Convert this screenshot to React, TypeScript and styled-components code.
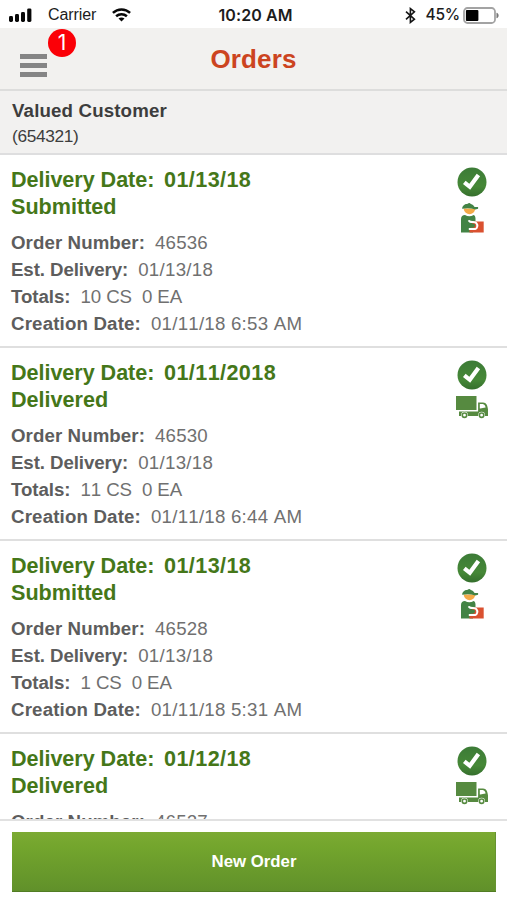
import React from 'react';
import styled, { createGlobalStyle } from 'styled-components';

const GlobalStyle = createGlobalStyle`
  *, *::before, *::after { box-sizing: border-box; }
  body { margin: 0; background: #fff; font-family: "Liberation Sans", Arial, sans-serif; }
`;

const Screen = styled.div`
  width: 507px;
  height: 900px;
  display: flex;
  flex-direction: column;
  overflow: hidden;
  background: #fff;
`;

const StatusBar = styled.header`
  height: 28px;
  flex: none;
  display: grid;
  grid-template-columns: 1fr auto 1fr;
  align-items: center;
  padding: 2px 7px 0 8px;
  color: #1c1c1c;
  font: 16px/24px "Liberation Sans", sans-serif;
`;

const StatusGroup = styled.div<{ $end?: boolean }>`
  display: flex;
  align-items: center;
  justify-content: ${(p) => (p.$end ? 'flex-end' : 'flex-start')};
  svg { display: block; flex: none; }
`;

const Carrier = styled.span`
  margin: 0 16px 0 16px;
  letter-spacing: -0.1px;
`;

const Clock = styled.span`
  font: 600 16px/24px Inter, sans-serif;
  letter-spacing: 0.1px;
  margin-left: 3px;
`;

const Percent = styled.span`
  font: 500 15.5px/24px Inter, sans-serif;
  letter-spacing: -0.2px;
  margin: 0 3px 0 9px;
`;

const NavBar = styled.nav`
  position: relative;
  height: 63px;
  flex: none;
  display: flex;
  justify-content: center;
  background: #f2f1ef;
  border-bottom: 2px solid #dddddc;
`;

const NavTitle = styled.h1`
  margin: 0;
  font-size: 26px;
  line-height: 62px;
  letter-spacing: 0.15px;
  color: #cc4420;
`;

const MenuButton = styled.button`
  position: absolute;
  left: 20px;
  top: 26px;
  width: 27px;
  height: 23px;
  padding: 0;
  border: 0;
  background: none;
  display: flex;
  flex-direction: column;
  justify-content: space-between;
`;

const MenuBar = styled.span`
  height: 5px;
  background: #858585;
`;

const Badge = styled.span`
  position: absolute;
  left: 48px;
  top: 1px;
  width: 28px;
  height: 28px;
  border-radius: 50%;
  background: #fb0007;
  color: #fff;
  font: 21px/28px Inter, sans-serif;
  text-align: center;
`;

const Customer = styled.section`
  height: 64px;
  flex: none;
  padding: 7px 12px;
  background: #f2f1f0;
  border-bottom: 2px solid #dededf;
  color: #3d3d3d;
`;

const CustomerName = styled.div`
  font-weight: bold;
  font-size: 18.7px;
  line-height: 26px;
  letter-spacing: 0.15px;
`;

const CustomerId = styled.div`
  font-size: 17.3px;
  line-height: 25px;
  letter-spacing: -0.35px;
`;

const OrderList = styled.main`
  flex: 1;
  min-height: 0;
  overflow: hidden;
`;

const OrderRow = styled.article`
  height: 193px;
  display: flex;
  justify-content: space-between;
  padding: 11px 18px 0 11px;
  border-bottom: 2px solid #dfdfdf;
`;

const OrderTitle = styled.h2`
  margin: 0 0 9px;
  font-size: 21.6px;
  line-height: 27px;
  color: #457719;
`;

const TitleLine = styled.div`
  display: flex;
  white-space: nowrap;
`;

const TitleLabel = styled.span`
  width: 153px;
  letter-spacing: -0.05px;
`;

const TitleDate = styled.span`
  font-kerning: none;
  letter-spacing: 0.4px;
`;

const Detail = styled.div`
  display: flex;
  gap: 10px;
  white-space: nowrap;
  font-size: 18.7px;
  line-height: 27px;
  color: #707070;
`;

const DetailLabel = styled.span<{ $tracking: number }>`
  font-weight: bold;
  letter-spacing: ${(p) => p.$tracking}px;
  color: #5d5d5d;
`;

const DetailValue = styled.span<{ $tracking: number }>`
  white-space: pre;
  font-kerning: none;
  letter-spacing: ${(p) => p.$tracking}px;
`;

const Icons = styled.div`
  width: 34px;
  padding-top: 1px;
  display: flex;
  flex-direction: column;
  align-items: center;
  gap: 5px;
  svg { display: block; flex: none; }
`;

const Footer = styled.footer`
  height: 81px;
  flex: none;
  padding: 11px 11px 0 12px;
  border-top: 2px solid #e1e1e1;
  background: #fff;
`;

const NewOrderButton = styled.button`
  display: block;
  width: 100%;
  height: 60px;
  padding: 0;
  border: 0;
  box-shadow: inset 0 -1px #527d24, inset -1px 0 #669331;
  background: linear-gradient(#7caa33, #73a52d 25%, #60902a);
  color: #fff;
  font: bold 16.8px/60px "Liberation Sans", sans-serif;
`;

function SignalIcon() {
  return (
    <svg width="24" height="14" viewBox="0 0 24 14" fill="#080808">
      <rect x="1" y="8" width="4" height="6" rx="1.4" />
      <rect x="7" y="6" width="4" height="8" rx="1.4" />
      <rect x="13" y="4" width="4" height="10" rx="1.4" />
      <rect x="19.2" y="0.4" width="4.2" height="13.6" rx="1.4" />
    </svg>
  );
}

function WifiIcon() {
  return (
    <svg width="19" height="14" viewBox="0 0 19 14" fill="none" stroke="#080808" strokeWidth="2.5">
      <path d="M.9 4.9C5.8.3 13.2.3 18.1 4.9" />
      <path d="M4.1 8.3C7.2 5.5 11.8 5.5 14.9 8.3" />
      <path d="M9.5 13.5 6.5 10.6C8.2 9.1 10.8 9.1 12.5 10.6Z" fill="#080808" stroke="none" />
    </svg>
  );
}

function BluetoothIcon() {
  return (
    <svg width="11" height="17" viewBox="0 0 11 17" fill="none" stroke="#151515" strokeWidth="1.6">
      <path d="M1 4.6 9.4 12.2 5.4 15.4V1.6L9.4 4.8 1 12.4" />
    </svg>
  );
}

function BatteryIcon() {
  return (
    <svg width="37" height="17" viewBox="0 0 37 17">
      <rect x="1" y="1" width="31" height="15" rx="3.5" fill="#fff" stroke="#a3a3a3" strokeWidth="1.8" />
      <rect x="2.9" y="3" width="12.5" height="11" rx="1" fill="#000" />
      <path d="M33.8 6v5c2-.7 2-4.3 0-5Z" fill="#777" stroke="#777" strokeWidth=".6" />
    </svg>
  );
}

function CheckIcon() {
  return (
    <svg width="30" height="30" viewBox="0 0 30 30">
      <defs>
        <linearGradient id="checkFill" x1="0" y1="0" x2="0" y2="1">
          <stop offset="0" stopColor="#3c7b37" />
          <stop offset="0.65" stopColor="#468837" />
          <stop offset="1" stopColor="#356f2d" />
        </linearGradient>
      </defs>
      <circle cx="15" cy="15" r="14.5" fill="url(#checkFill)" />
      <path d="M7.3 15.4 12.8 19.8 21.4 8" fill="none" stroke="#fff" strokeWidth="4.2" />
    </svg>
  );
}

function CourierIcon() {
  return (
    <svg width="26" height="32" viewBox="0 0 26 32">
      <path d="M4.5 6.5h11.8C15.4 14 5.8 14 4.5 6.5Z" fill="#f4aa48" />
      <path d="M3.1 6.7C3.4 3.2 6.2 1.9 8.7 1.7 9.7.8 11 .9 11.8 1.9c2 .7 3.2 1.7 3.8 3.2h3.5v1.6l-2.8.8C12 5.9 7.6 5.8 3.1 6.7Z" fill="#438345" />
      <path d="M2 30.5V17c0-2.5 1.6-4 4-4 2.8 1.6 5.8 1.6 8.7 0 1.2.5 1.7 1.8 1.8 3.5v3H14v11Z" fill="#438345" />
      <path d="M14 19.5h10.7v11H10.5v-2Z" fill="#da5130" />
      <path d="M9.8 18.2c.6 3 6.2 1 7.6 2.9 1.6 2 1 5.5-1.2 6H9.8" fill="none" stroke="#fff" strokeWidth="2" />
      <path d="M10.8 21.4c3 .3 5-.1 5.2 1.4.2 1.9-1 3-2.5 3h-4.2v-4.6Z" fill="#438345" />
    </svg>
  );
}

function TruckIcon() {
  return (
    <svg width="34" height="24" viewBox="0 0 34 24">
      <path d="M1 1h20.5v14H1Z" fill="#568a40" />
      <path d="M4 16.6h19.1V7.4H28c3.5.2 4.5 2.9 5 7v6.6H4Z" fill="#568a40" />
      <path d="M24.8 9h2.9c1.9.2 2.6 1.8 2.9 3.5-2.5 0-3.2 1-5.8.9Z" fill="#fff" />
      <circle cx="9.5" cy="20.2" r="3.4" fill="#fff" />
      <circle cx="26.6" cy="20.2" r="3.4" fill="#fff" />
      <circle cx="9.5" cy="20.2" r="2.2" fill="#fff" stroke="#568a40" strokeWidth="1.6" />
      <circle cx="26.6" cy="20.2" r="2.2" fill="#fff" stroke="#568a40" strokeWidth="1.6" />
    </svg>
  );
}

type Order = {
  date: string;
  status: 'Submitted' | 'Delivered';
  number: string;
  estimate?: string;
  totals?: string;
  created?: string;
};

const orders: Order[] = [
  { date: '01/13/18', status: 'Submitted', number: '46536', estimate: '01/13/18', totals: '10 CS  0 EA', created: '01/11/18 6:53 AM' },
  { date: '01/11/2018', status: 'Delivered', number: '46530', estimate: '01/13/18', totals: '11 CS  0 EA', created: '01/11/18 6:44 AM' },
  { date: '01/13/18', status: 'Submitted', number: '46528', estimate: '01/13/18', totals: '1 CS  0 EA', created: '01/11/18 5:31 AM' },
  { date: '01/12/18', status: 'Delivered', number: '46527' },
];

const fields = [
  { key: 'number', label: 'Order Number:', labelTracking: 0.08, valueTracking: 0.2 },
  { key: 'estimate', label: 'Est. Delivery:', labelTracking: -0.09, valueTracking: 0.28 },
  { key: 'totals', label: 'Totals:', labelTracking: -0.05, valueTracking: -0.12 },
  { key: 'created', label: 'Creation Date:', labelTracking: 0.16, valueTracking: 0.23 },
] as const;

function OrderItem({ order }: { order: Order }) {
  return (
    <OrderRow>
      <div>
        <OrderTitle>
          <TitleLine>
            <TitleLabel>Delivery Date:</TitleLabel>
            <TitleDate>{order.date}</TitleDate>
          </TitleLine>
          <TitleLine>{order.status}</TitleLine>
        </OrderTitle>
        {fields.filter((field) => order[field.key]).map((field) => (
          <Detail key={field.key}>
            <DetailLabel $tracking={field.labelTracking}>{field.label}</DetailLabel>
            <DetailValue $tracking={field.valueTracking}>{order[field.key]}</DetailValue>
          </Detail>
        ))}
      </div>
      <Icons>
        <CheckIcon />
        {order.status === 'Submitted' ? <CourierIcon /> : <TruckIcon />}
      </Icons>
    </OrderRow>
  );
}

export default function App() {
  return (
    <>
      <GlobalStyle />
      <Screen>
        <StatusBar>
          <StatusGroup>
            <SignalIcon />
            <Carrier>Carrier</Carrier>
            <WifiIcon />
          </StatusGroup>
          <Clock>10:20 AM</Clock>
          <StatusGroup $end>
            <BluetoothIcon />
            <Percent>45%</Percent>
            <BatteryIcon />
          </StatusGroup>
        </StatusBar>
        <NavBar>
          <MenuButton aria-label="Menu">
            <MenuBar />
            <MenuBar />
            <MenuBar />
          </MenuButton>
          <Badge>1</Badge>
          <NavTitle>Orders</NavTitle>
        </NavBar>
        <Customer>
          <CustomerName>Valued Customer</CustomerName>
          <CustomerId>(654321)</CustomerId>
        </Customer>
        <OrderList>
          {orders.map((order) => (
            <OrderItem key={order.number} order={order} />
          ))}
        </OrderList>
        <Footer>
          <NewOrderButton>New Order</NewOrderButton>
        </Footer>
      </Screen>
    </>
  );
}
